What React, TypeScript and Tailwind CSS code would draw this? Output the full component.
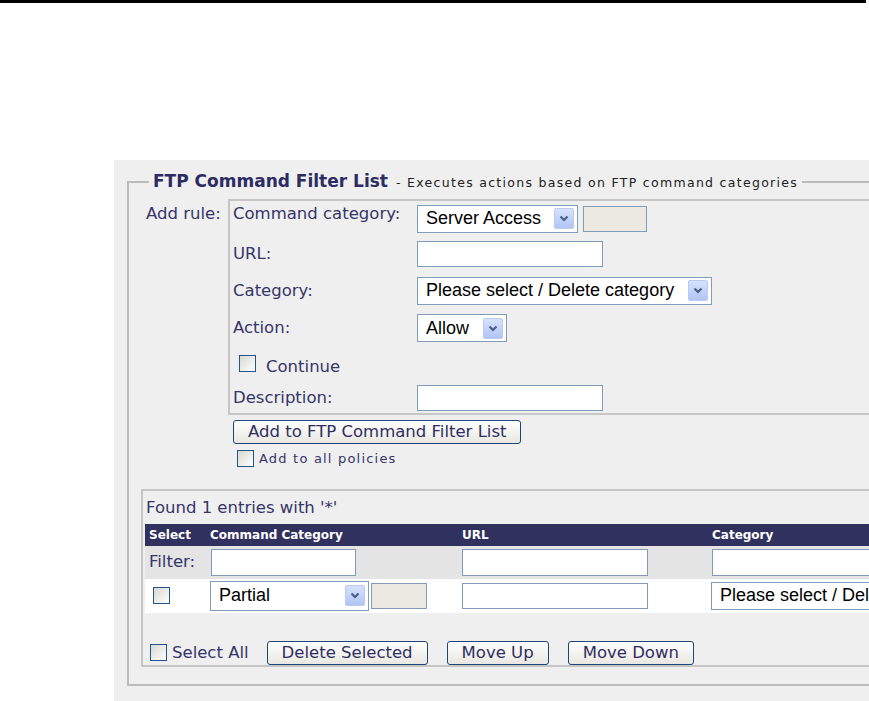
import React from "react";

// shared bits of the XP-ish form styling
const labelText = "text-[16.5px] leading-[20px] text-[#35356a] whitespace-nowrap";
const fieldText = "font-['Liberation_Sans',Arial,sans-serif] text-[18px] text-black";

function Chevron() {
  return (
    <svg width="10" height="7" viewBox="0 0 10 7">
      <path d="M1.5 1.5 L5 5 L8.5 1.5" fill="none" stroke="#4a5f88" strokeWidth="2.2" />
    </svg>
  );
}

function Select({ value, w, h = "h-[28px]" }: { value: string; w: string; h?: string }) {
  return (
    <div className={`${w} ${h} shrink-0 border border-[#7f9db9] bg-white flex items-center pl-[8px] pr-[3px] ${fieldText}`}>
      <span className="flex-1 whitespace-nowrap overflow-hidden">{value}</span>
      <span className="ml-[4px] w-[20px] h-[21px] shrink-0 rounded-[2px] border border-[#b9cbf3] bg-linear-to-b from-[#d6e2fd] to-[#b1c5f4] flex items-center justify-center">
        <Chevron />
      </span>
    </div>
  );
}

function TextBox({ w, h = "h-[26px]" }: { w: string; h?: string }) {
  return <input type="text" readOnly className={`${w} ${h} shrink-0 border border-[#7f9db9] bg-white`} />;
}

function GrayBox({ w }: { w: string }) {
  return <div className={`${w} h-[26px] shrink-0 border border-[#7f9db9] bg-[#ebe9e1]`} />;
}

function Check() {
  return <span className="w-[17px] h-[17px] shrink-0 inline-block border border-[#24558a] bg-linear-to-br from-[#d8d8d2] to-white" />;
}

function Btn({ children }: { children: React.ReactNode }) {
  return (
    <button className="h-[24px] px-[14px] rounded-[3px] border border-[#1f4478] bg-linear-to-b from-white to-[#e8e7e0] text-[16.5px] leading-[20px] text-[#2e2e62] whitespace-nowrap">
      {children}
    </button>
  );
}

function Row({ label, h, lift = "", children }: { label: string; h: string; lift?: string; children: React.ReactNode }) {
  return (
    <div className={`${h} flex items-center`}>
      <div className={`w-[184px] ${lift} ${labelText}`}>{label}</div>
      {children}
    </div>
  );
}

export default function App() {
  return (
    <div className="w-[869px] h-[701px] overflow-hidden bg-white font-['DejaVu_Sans',Verdana,sans-serif]">
      <div className="h-[3px] w-[866px] bg-black" />

      <div className="ml-[114px] mt-[157px] w-[800px] h-[541px] bg-[#efefef] pt-[12px]">
        <fieldset className="ml-[13px] w-[780px] border-2 border-[#bcbcbc] pb-[17px]">
          <legend className="ml-[20px] px-[4px] leading-[18px] whitespace-nowrap">
            <span className="text-[17px] font-bold text-[#2c2c62]">FTP Command Filter List</span>
            <span className="ml-[8px] text-[12.5px] tracking-[1.3px] text-[#222]">- Executes actions based on FTP command categories</span>
          </legend>

          {/* add rule form */}
          <div className="mt-[7px] ml-[17px] flex">
            <div className={`w-[82px] pt-[5px] ${labelText}`}>Add rule:</div>
            <div>
              <div className="w-[700px] border-2 border-[#c6c6c6] pl-[3px]">
                <Row label="Command category:" h="h-[35px]" lift="-mt-[10px]">
                  <Select value="Server Access" w="w-[161px]" />
                  <div className="ml-[5px] flex">
                    <GrayBox w="w-[64px]" />
                  </div>
                </Row>
                <Row label="URL:" h="h-[36px]">
                  <TextBox w="w-[186px]" />
                </Row>
                <Row label="Category:" h="h-[37px]">
                  <Select value="Please select / Delete category" w="w-[295px]" />
                </Row>
                <Row label="Action:" h="h-[38px]">
                  <Select value="Allow" w="w-[90px]" />
                </Row>
                <div className="h-[32px] flex items-center pl-[6px]">
                  <Check />
                  <span className={`ml-[10px] mt-[8px] ${labelText}`}>Continue</span>
                </div>
                <div className="h-[34px] flex items-center pt-[3px]">
                  <div className={`w-[184px] ${labelText}`}>Description:</div>
                  <TextBox w="w-[186px]" />
                </div>
              </div>

              <div className="mt-[5px] ml-[5px] flex">
                <Btn>Add to FTP Command Filter List</Btn>
              </div>
              <div className="mt-[5px] ml-[9px] flex items-center">
                <Check />
                <span className="ml-[5px] text-[13px] tracking-[1.2px] text-[#35356a]">Add to all policies</span>
              </div>
            </div>
          </div>

          {/* existing entries */}
          <div className="mt-[20px] ml-[12px] w-[760px] border-l-2 border-t-2 border-b-2 border-[#c6c6c6] pl-[2px]">
            <div className={`mt-[7px] ml-[1px] ${labelText}`}>Found 1 entries with '*'</div>

            <div className="mt-[6px] grid grid-cols-[62px_251px_250px_300px]">
              <div className="h-[22px] bg-[#31315f] pl-[4px] text-[12px] leading-[22px] font-bold text-white">Select</div>
              <div className="h-[22px] bg-[#31315f] pl-[3px] text-[12px] leading-[22px] font-bold text-white">Command Category</div>
              <div className="h-[22px] bg-[#31315f] pl-[4px] text-[12px] leading-[22px] font-bold text-white">URL</div>
              <div className="h-[22px] bg-[#31315f] pl-[4px] text-[12px] leading-[22px] font-bold text-white">Category</div>

              <div className={`h-[33px] bg-[#e4e4e4] pl-[4px] flex items-center ${labelText}`}>Filter:</div>
              <div className="h-[33px] bg-[#e4e4e4] pl-[4px] flex items-center">
                <TextBox w="w-[145px]" h="h-[27px]" />
              </div>
              <div className="h-[33px] bg-[#e4e4e4] pl-[4px] flex items-center">
                <TextBox w="w-[186px]" h="h-[27px]" />
              </div>
              <div className="h-[33px] bg-[#e4e4e4] pl-[4px] flex items-center">
                <TextBox w="w-[220px]" h="h-[27px]" />
              </div>

              <div className="h-[34px] bg-white pl-[8px] flex items-center">
                <Check />
              </div>
              <div className="h-[34px] bg-white pl-[3px] flex items-center">
                <Select value="Partial" w="w-[159px]" h="h-[30px]" />
                <div className="ml-[2px] flex">
                  <GrayBox w="w-[56px]" />
                </div>
              </div>
              <div className="h-[34px] bg-white pl-[4px] flex items-center">
                <TextBox w="w-[186px]" />
              </div>
              <div className="h-[34px] bg-white pl-[3px] flex items-center">
                <Select value="Please select / Delete category" w="w-[295px]" />
              </div>
            </div>

            <div className="mt-[28px] h-[24px] flex items-center pl-[5px]">
              <Check />
              <span className={`ml-[5px] ${labelText}`}>Select All</span>
              <div className="ml-[18px] flex">
                <Btn>Delete Selected</Btn>
              </div>
              <div className="ml-[19px] flex">
                <Btn>Move Up</Btn>
              </div>
              <div className="ml-[19px] flex">
                <Btn>Move Down</Btn>
              </div>
            </div>
          </div>
        </fieldset>
      </div>
    </div>
  );
}
